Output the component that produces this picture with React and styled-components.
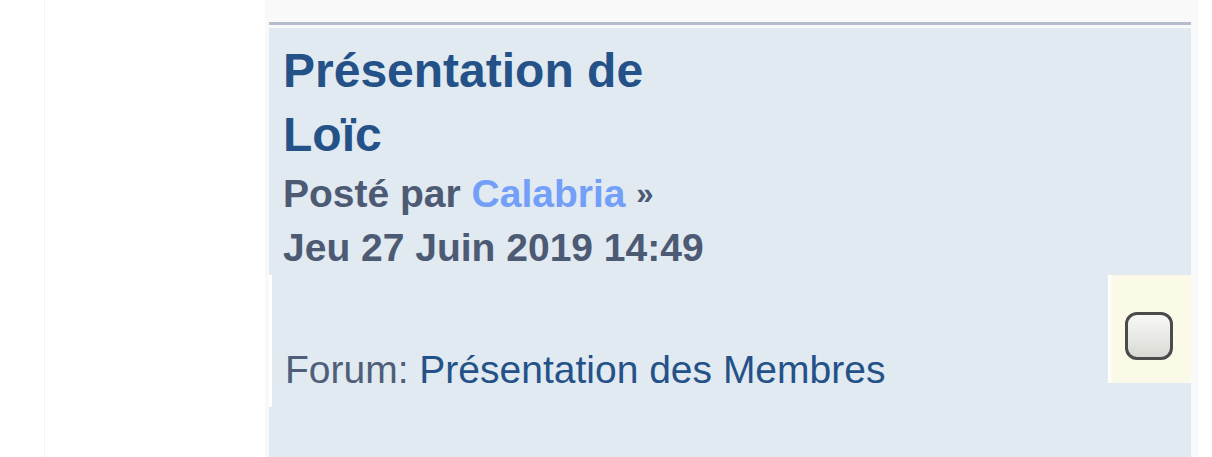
import React from 'react';
import styled, { createGlobalStyle } from 'styled-components';

const GlobalStyle = createGlobalStyle`
    html, body {
        margin: 0;
        padding: 0;
        background: #ffffff;
    }
    body {
        font-family: "Liberation Sans", Arial, Helvetica, sans-serif;
    }
`;

const Page = styled.div`
    display: flex;
    min-height: 457px;
    background: #ffffff;
`;

const Gutter = styled.div`
    width: 44px;
    flex-shrink: 0;
`;

const Wrap = styled.div`
    flex: 1;
    display: grid;
    grid-template-columns: 220px 1fr;
    border-left: 1px solid #f3f4f6;
    padding-right: 14px;
`;

const Side = styled.aside`
    background: #ffffff;
`;

const Main = styled.main`
    background: #f9f9f9;
    padding: 22px 7px 0 4px;
    display: flex;
    flex-direction: column;
`;

const Divider = styled.div`
    height: 3px;
    background: #b5bdcc;
    margin-bottom: 3px;
`;

const Panel = styled.section`
    flex: 1;
    background: #e1e9f1;
`;

const Header = styled.div`
    padding: 11px 14px 0;
`;

const Title = styled.h3`
    margin: 0;
    font-size: 48px;
    line-height: 64px;
    font-weight: bold;
    color: #245288;
    width: 420px;
`;

const Posted = styled.p`
    margin: 0;
    font-size: 39px;
    line-height: 54px;
    font-weight: bold;
    color: #4c5a74;
`;

const Author = styled.a`
    color: #739ff8;
    text-decoration: none;
`;

const Raquo = styled.span`
    font-size: 31px;
    vertical-align: 3px;
`;

const Row = styled.div`
    display: flex;
    align-items: flex-start;
`;

const InfoCell = styled.div`
    flex: 1;
    box-sizing: border-box;
    height: 132px;
    border-left: 3px solid #ffffff;
    padding: 72px 0 0 13px;
    font-size: 39px;
    line-height: 46px;
    color: #4f5e79;
`;

const ForumLink = styled.a`
    color: #245288;
    text-decoration: none;
`;

const MarkCell = styled.div`
    box-sizing: border-box;
    width: 83px;
    height: 108px;
    border-left: 3px solid #ffffff;
    background: #fbf9e8;
    padding: 37px 0 0 14px;
`;

const CheckBox = styled.span`
    display: block;
    box-sizing: border-box;
    width: 48px;
    height: 48px;
    border: 3px solid #4b4b4b;
    border-radius: 12px;
    background: linear-gradient(to bottom, #f8f8f6 0%, #e9e9e6 50%, #d9d9d4 100%);
`;

export default function App() {
    return (
        <>
            <GlobalStyle />
            <Page>
                <Gutter />
                <Wrap>
                    <Side />
                    <Main>
                        <Divider />
                        <Panel>
                            <Header>
                                <Title>Présentation de Loïc</Title>
                                <Posted>
                                    Posté par <Author href="#">Calabria</Author> <Raquo>»</Raquo><br />
                                    Jeu 27 Juin 2019 14:49
                                </Posted>
                            </Header>
                            <Row>
                                <InfoCell>
                                    Forum: <ForumLink href="#">Présentation des Membres</ForumLink>
                                </InfoCell>
                                <MarkCell>
                                    <CheckBox role="checkbox" aria-checked="false" />
                                </MarkCell>
                            </Row>
                        </Panel>
                    </Main>
                </Wrap>
            </Page>
        </>
    );
}
